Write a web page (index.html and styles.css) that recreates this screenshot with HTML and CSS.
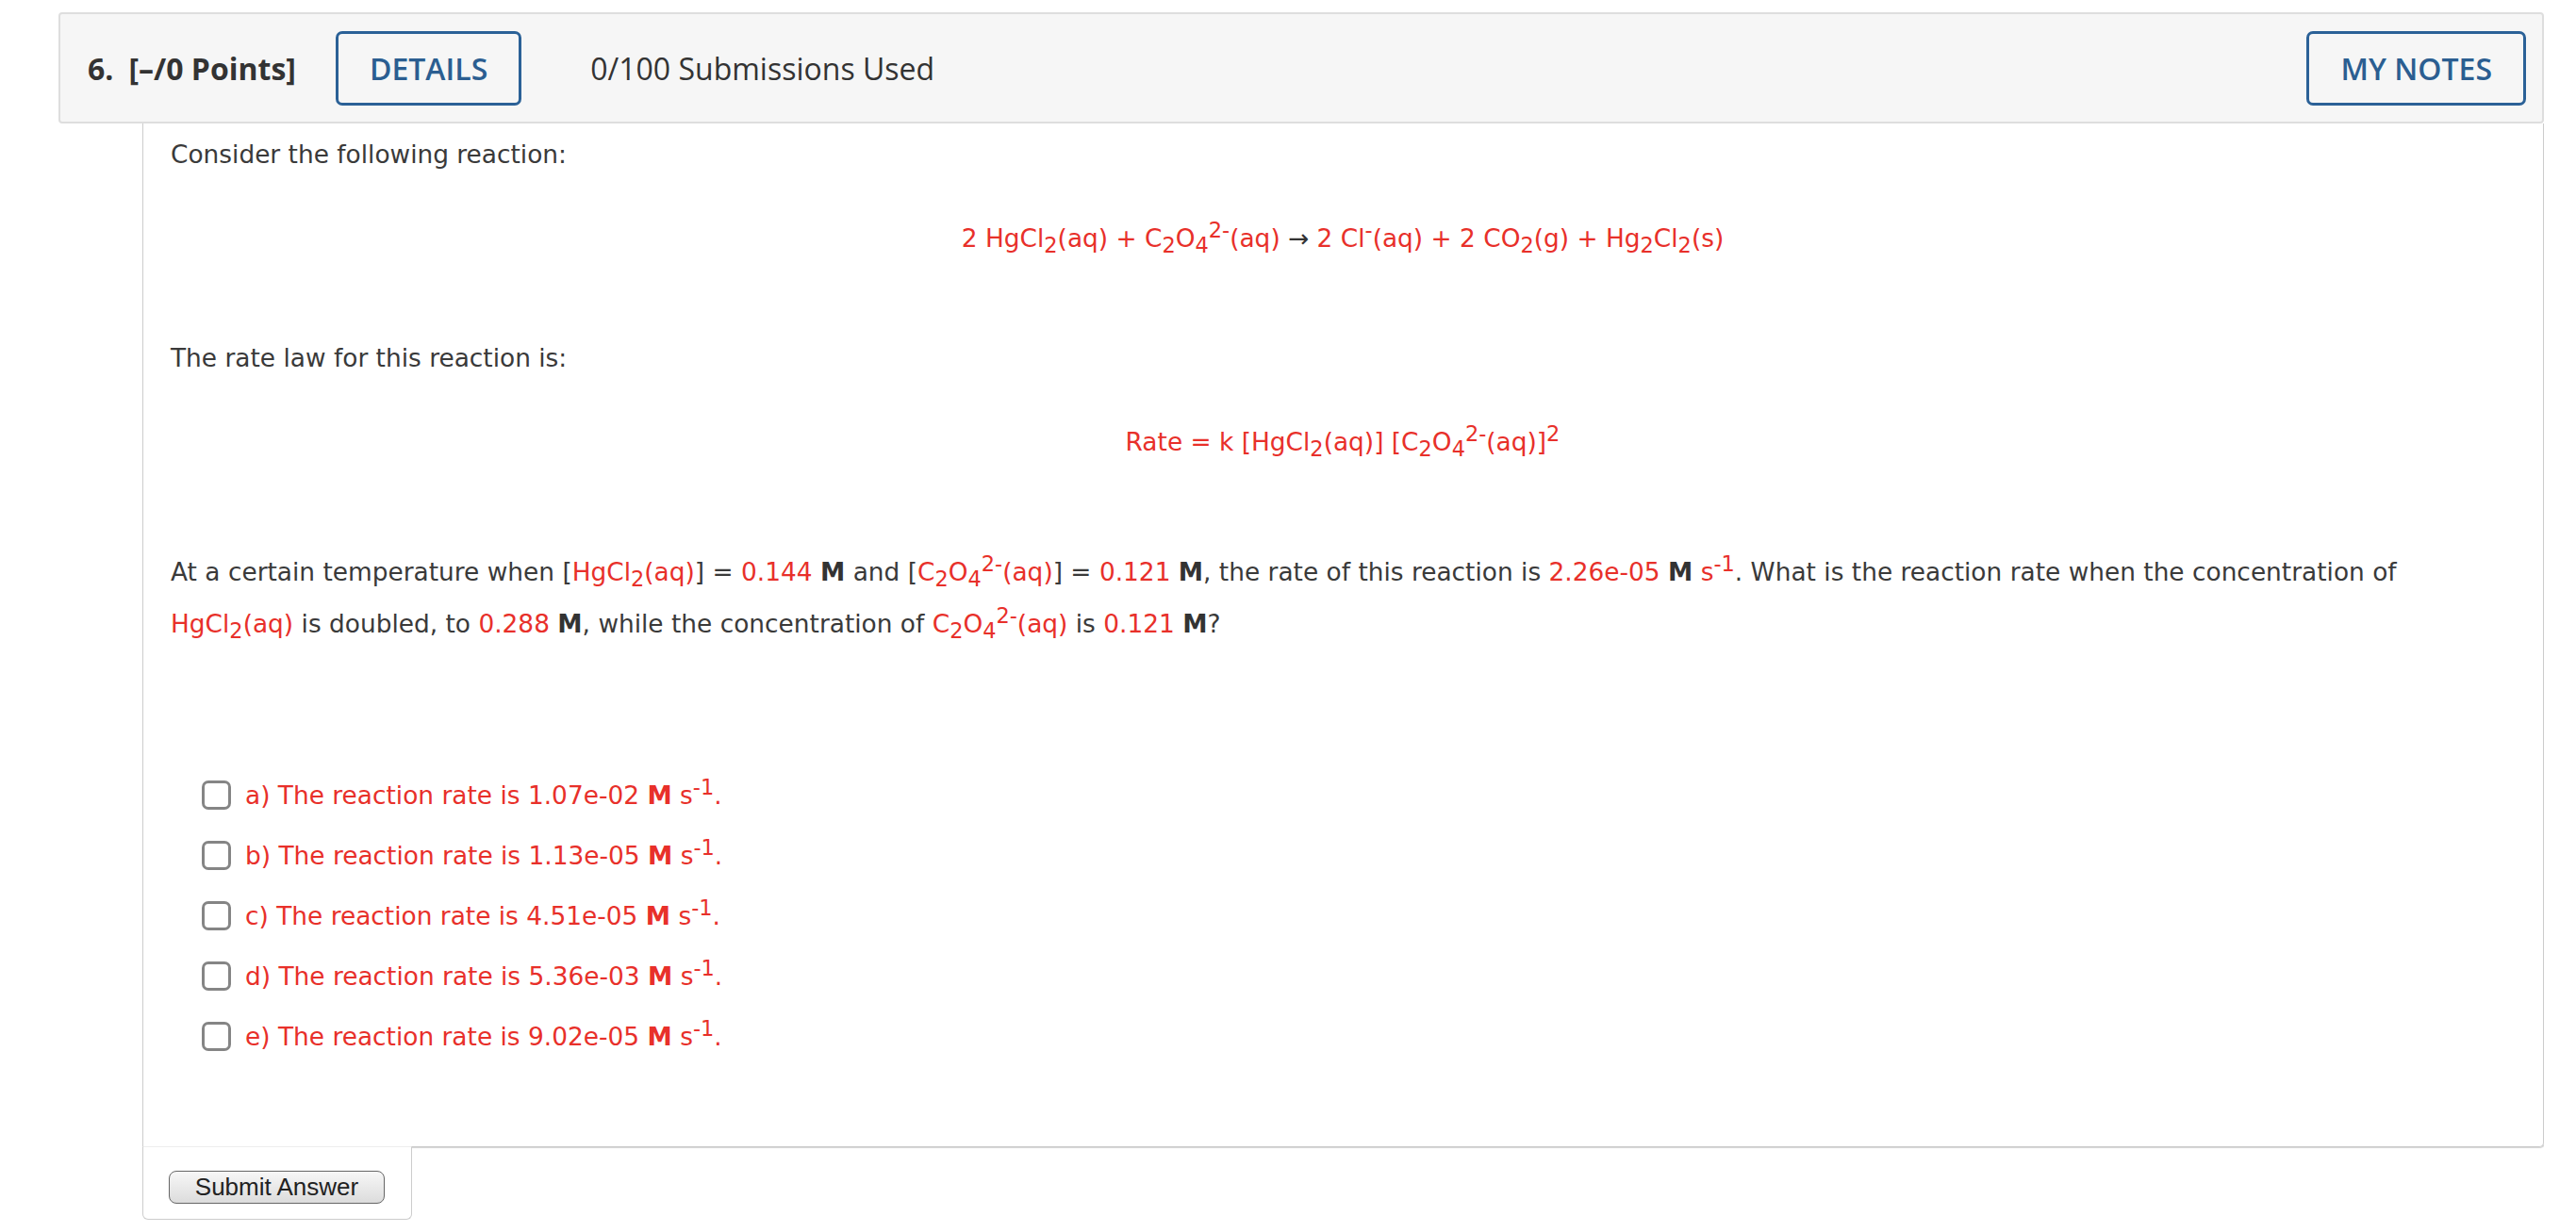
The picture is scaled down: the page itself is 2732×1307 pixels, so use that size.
FILE: index.html
```html
<!DOCTYPE html>
<html lang="en">
<head>
  <meta charset="UTF-8">
  <meta name="viewport" content="width=device-width, initial-scale=1.0">
  <title>Question 6</title>
  <link rel="stylesheet" href="styles.css">
</head>
<body>

  <div class="question">
    <!-- question header -->
    <div class="question-header">
      <span class="q-number">6.</span>
      <span class="q-points">[&ndash;/0 Points]</span>
      <button class="header-button details-button">DETAILS</button>
      <span class="q-submissions">0/100 Submissions Used</span>
      <button class="header-button notes-button">MY NOTES</button>
    </div>

    <div class="question-body">
      <div class="question-content">
        <p class="intro">Consider the following reaction:</p>
        <p class="equation red">2 HgCl<sub>2</sub>(aq) + C<sub>2</sub>O<sub>4</sub><sup>2-</sup>(aq) <span class="arrow">&rarr;</span> 2 Cl<sup>-</sup>(aq) + 2 CO<sub>2</sub>(g) + Hg<sub>2</sub>Cl<sub>2</sub>(s)</p>

        <p class="intro rate-intro">The rate law for this reaction is:</p>
        <p class="equation red">Rate = k [HgCl<sub>2</sub>(aq)] [C<sub>2</sub>O<sub>4</sub><sup>2-</sup>(aq)]<sup>2</sup></p>

        <p class="prompt">At a certain temperature when [<span class="red">HgCl<sub>2</sub>(aq)</span>] = <span class="red">0.144</span> <b>M</b> and [<span class="red">C<sub>2</sub>O<sub>4</sub><sup>2-</sup>(aq)</span>] = <span class="red">0.121</span> <b>M</b>, the rate of this reaction is <span class="red">2.26e-05 <b>M</b> s<sup>-1</sup></span>. What is the reaction rate when the concentration of <span class="red">HgCl<sub>2</sub>(aq)</span> is doubled, to <span class="red">0.288</span> <b>M</b>, while the concentration of <span class="red">C<sub>2</sub>O<sub>4</sub><sup>2-</sup>(aq)</span> is <span class="red">0.121</span> <b>M</b>?</p>

        <!-- answer choices -->
        <ul class="choices">
          <li><span class="checkbox"></span><span class="red">a) The reaction rate is 1.07e-02 <b>M</b> s<sup>-1</sup>.</span></li>
          <li><span class="checkbox"></span><span class="red">b) The reaction rate is 1.13e-05 <b>M</b> s<sup>-1</sup>.</span></li>
          <li><span class="checkbox"></span><span class="red">c) The reaction rate is 4.51e-05 <b>M</b> s<sup>-1</sup>.</span></li>
          <li><span class="checkbox"></span><span class="red">d) The reaction rate is 5.36e-03 <b>M</b> s<sup>-1</sup>.</span></li>
          <li><span class="checkbox"></span><span class="red">e) The reaction rate is 9.02e-05 <b>M</b> s<sup>-1</sup>.</span></li>
        </ul>
      </div>

      <div class="submit-tab">
        <button class="submit-button">Submit Answer</button>
      </div>
    </div>
  </div>

</body>
</html>
```

FILE: styles.css
```css
/* base */
body {
  margin: 13px 34px 0 62px;
  font-family: Verdana, 'DejaVu Sans', sans-serif;
  font-size: 26.4px;
  color: #3a3a3a;
  background-color: #fff;
}

/* header bar */
.question-header {
  display: flex;
  align-items: center;
  height: 114px;
  padding: 0 17px 0 29px;
  background-color: #f6f6f6;
  border: 2px solid #dedede;
  border-radius: 4px;
  font-family: 'Open Sans', sans-serif;
  font-size: 32px;
  color: #333;
}

.q-number {
  font-weight: bold;
}

.q-points {
  font-weight: bold;
  margin-left: 16px;
}

.header-button {
  height: 79px;
  padding: 0 33px;
  background-color: transparent;
  border: 3px solid #2b6197;
  border-radius: 7px;
  color: #2b5e91;
  font-family: 'Open Sans', sans-serif;
  font-size: 32px;
  font-weight: 600;
  cursor: pointer;
}

.details-button {
  margin-left: 42px;
}

.q-submissions {
  margin-left: 73px;
}

.notes-button {
  margin-left: auto;
}

/* question body */
.question-body {
  margin-left: 89px;
}

.question-content {
  padding: 15px 30px 85px 29px;
  border: 1px solid #cccccc;
  border-top: none;
  border-radius: 0 0 5px 0;
  box-shadow: 1px 1px 1px rgba(0, 0, 0, 0.18);
}

.question-content p {
  margin: 0;
  line-height: 36px;
}

sub, sup {
  line-height: 0;
  font-size: 0.85em;
}

.red {
  color: #e8302a;
}

.equation {
  margin-top: 53px !important;
  text-align: center;
}

.arrow {
  color: #333;
}

.rate-intro {
  margin-top: 91px !important;
}

.question-content .prompt {
  margin-top: 92px;
  line-height: 55px;
}

.prompt b {
  color: #333;
}

/* answer choices */
.choices {
  list-style: none;
  margin: 122px 0 0 0;
  padding: 0 0 0 33px;
}

.choices li {
  display: flex;
  align-items: center;
  gap: 15px;
  height: 64px;
}

.checkbox {
  width: 31px;
  height: 31px;
  box-sizing: border-box;
  border: 3px solid #858585;
  border-radius: 7px;
  background-color: #fff;
}

/* submit */
.submit-tab {
  width: 286px;
  height: 78px;
  margin-top: -1px;
  padding: 25px 0 0 27px;
  box-sizing: border-box;
  background-color: #fff;
  border: 1px solid #cccccc;
  border-top: 1px solid #eeeeee;
  border-radius: 0 0 6px 6px;
}

.submit-button {
  width: 229px;
  height: 35px;
  padding: 0;
  font-family: 'Liberation Sans', Arial, sans-serif;
  font-size: 26px;
  color: #222;
  background: linear-gradient(#f7f7f7, #dcdcdc);
  border: 1px solid #666;
  border-radius: 8px;
  cursor: pointer;
}
```
